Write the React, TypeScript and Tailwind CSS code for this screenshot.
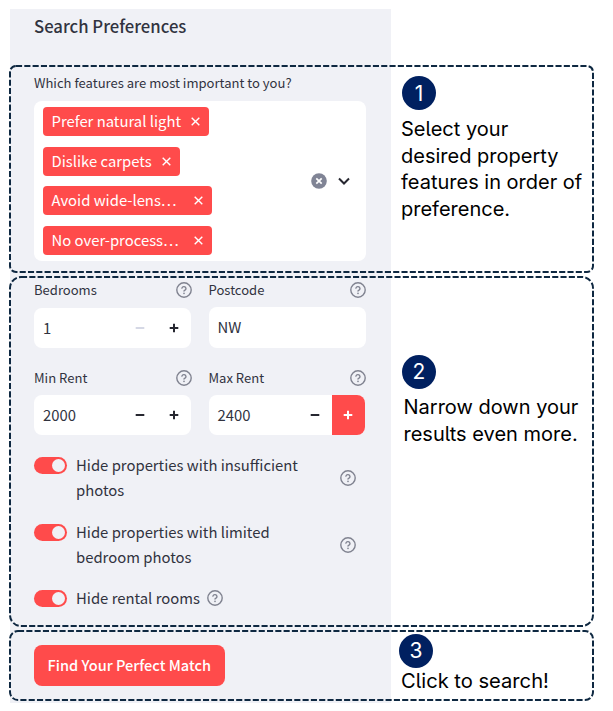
import type { ReactNode } from "react";

function Help() {
  return (
    <svg className="block size-4 shrink-0" viewBox="0 0 16 16" fill="none" stroke="#808390" strokeWidth="1.4" strokeLinecap="round" strokeLinejoin="round">
      <circle cx="8" cy="8" r="7.2" />
      <path d="M5.9 6.1a2.1 2.1 0 0 1 4.1.6c0 1.4-2 1.9-2 2.1v.3" />
      <path d="M8 11.3v.1" strokeWidth="1.6" />
    </svg>
  );
}

function Cross() {
  return (
    <svg className="block size-[9px] shrink-0" viewBox="0 0 9 9" stroke="white" strokeWidth="1.4">
      <path d="M.7.7l7.6 7.6M8.3.7L.7 8.3" />
    </svg>
  );
}

function Tag({ text, className }: { text: string; className: string }) {
  return (
    <div className={`flex h-[29px] items-center justify-between rounded-[4px] bg-[#ff4b4b] pr-[9px] pl-[8.5px] text-[14.85px] leading-5 text-white ${className}`}>
      <span className="pb-px whitespace-nowrap">{text}</span>
      <Cross />
    </div>
  );
}

function Label({ text }: { text: string }) {
  return (
    <div className="flex h-4 items-center justify-between">
      <span className="text-[13.05px] leading-4">{text}</span>
      <Help />
    </div>
  );
}

function Sign({ plus, color }: { plus?: boolean; color: string }) {
  return (
    <svg className="block size-[10px]" viewBox="0 0 10 10" stroke={color} strokeWidth="2">
      <path d={plus ? "M.7 5h8.6M5 .7v8.6" : "M.7 5h8.6"} />
    </svg>
  );
}

function NumberField({ value, minus = "#262730", active }: { value: string; minus?: string; active?: boolean }) {
  return (
    <div className="flex h-[40px] w-[156.5px] overflow-hidden rounded-lg bg-white">
      <span className="flex flex-1 items-center pl-[9px] text-[14.85px]">{value}</span>
      <span className="flex w-[34px] items-center justify-center"><Sign color={minus} /></span>
      <span className={active ? "flex w-[33.5px] items-center justify-center bg-[#ff4b4b]" : "flex w-[33.5px] items-center justify-center"}>
        <Sign plus color={active ? "#ffffff" : "#262730"} />
      </span>
    </div>
  );
}

function Toggle({ children, className, help }: { children: ReactNode; className: string; help: string }) {
  return (
    <div className="flex items-start">
      <span className="mt-[4px] flex h-[17px] w-[33px] shrink-0 items-center justify-end rounded-full bg-[#ff4b4b] pr-[2px]">
        <span className="size-[13px] rounded-full bg-[#f0f1f6]" />
      </span>
      <span className={`-mt-px mb-px ml-[9px] text-[14.85px] leading-[25px] whitespace-nowrap ${className}`}>{children}</span>
      <span className={help}><Help /></span>
    </div>
  );
}

function Frame({ height, radius, className }: { height: number; radius: number; className: string }) {
  return (
    <svg className={`absolute left-[9px] w-[586px] ${className}`} style={{ height }} fill="none">
      <rect x="1" y="1" width="583" height={height - 2} rx={radius} stroke="#0e2841" strokeWidth="2" strokeDasharray="6.1 2.2" />
    </svg>
  );
}

function Badge({ n }: { n: string }) {
  return (
    <span className="flex size-[34px] items-center justify-center rounded-full bg-[#002060] text-[21px] leading-none text-white">{n}</span>
  );
}

export default function App() {
  return (
    <main className="relative flex h-[711px] w-[613px] bg-white pt-[9px] pl-[10px]">
      <aside className="flex h-[694px] w-[381px] flex-col items-start bg-[#f0f1f6] pl-6 font-['Noto_Sans_CJK_SC','Noto_Sans_CJK_JP',sans-serif] text-[#31333f]">
        <h1 className="mt-[5px] h-6 text-[16.7px] leading-6 font-medium">Search Preferences</h1>
        <p className="mt-[36px] h-[18px] text-[13.05px] leading-[18px]">Which features are most important to you?</p>
        <div className="mt-[9px] flex h-[160px] w-[332px] items-center rounded-lg bg-white pl-[9px]">
          <div className="flex flex-1 flex-col items-start gap-[10.7px]">
            <Tag text="Prefer natural light" className="w-[166px]" />
            <Tag text="Dislike carpets" className="w-[137px]" />
            <Tag text="Avoid wide-lens…" className="w-[169px]" />
            <Tag text="No over-process…" className="w-[169px]" />
          </div>
          <svg className="mr-[11px] size-4" viewBox="0 0 16 16">
            <circle cx="8" cy="8" r="7.8" fill="#808495" />
            <path d="M5.3 5.3l5.4 5.4M10.7 5.3l-5.4 5.4" stroke="white" strokeWidth="1.7" />
          </svg>
          <svg className="mr-4 h-[8px] w-[12px]" viewBox="0 0 12 8" fill="none" stroke="#262730" strokeWidth="2">
            <path d="M1 1.5l5 5 5-5" />
          </svg>
        </div>
        <div className="mt-[21px] grid w-[332px] grid-cols-[157.5px_157px] gap-x-[17px]">
          <Label text="Bedrooms" />
          <Label text="Postcode" />
          <div className="mt-[10px]"><NumberField value="1" minus="#d5d8e5" /></div>
          <div className="mt-[9px] flex h-[41px] items-center rounded-lg bg-white pl-[9px] text-[14.85px]">NW</div>
        </div>
        <div className="mt-[22px] grid w-[332px] grid-cols-[157.5px_157px] gap-x-[17px]">
          <Label text="Min Rent" />
          <Label text="Max Rent" />
          <div className="mt-[9px]"><NumberField value="2000" /></div>
          <div className="mt-[9px]"><NumberField value="2400" active /></div>
        </div>
        <div className="mt-[18px] flex flex-col gap-[16.5px]">
          <Toggle className="w-[223px]" help="mt-[17px] ml-[41px]">Hide properties with insufficient<br />photos</Toggle>
          <Toggle className="w-[223px]" help="mt-[17px] ml-[41px]">Hide properties with limited<br />bedroom photos</Toggle>
          <Toggle className="w-[124px]" help="mt-[4px] ml-[7px]">Hide rental rooms</Toggle>
        </div>
        <button className="mt-[34px] flex h-[41px] w-[190.5px] items-center justify-center rounded-lg bg-[#ff4b4b] pb-[2px] text-[14.55px] font-medium whitespace-nowrap text-white">Find Your Perfect Match</button>
      </aside>
      <section className="flex w-[203px] flex-col items-start pt-[67px] pl-[11px] font-['Inter',sans-serif] text-[20px] leading-[26.6px] text-black [font-feature-settings:'cv05']">
        <Badge n="1" />
        <p className="mt-[6px] -ml-px whitespace-nowrap">Select your<br />desired property<br />features in order of<br />preference.</p>
        <div className="mt-[132.6px]"><Badge n="2" /></div>
        <p className="mt-[5px] ml-[1.5px] whitespace-nowrap">Narrow down your<br />results even more.</p>
        <div className="mt-[186.4px] -ml-[3px]"><Badge n="3" /></div>
        <p className="-ml-px text-[20.15px] whitespace-nowrap">Click to search!</p>
      </section>
      <Frame className="top-[65px]" height={208} radius={6} />
      <Frame className="top-[276px]" height={351} radius={11} />
      <Frame className="top-[630px]" height={71} radius={8} />
    </main>
  );
}
